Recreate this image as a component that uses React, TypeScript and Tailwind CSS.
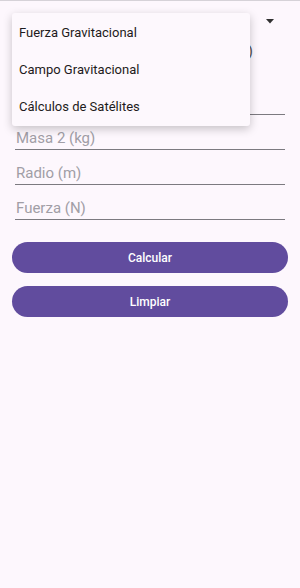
const fields = ['Masa 1 (kg)', 'Masa 2 (kg)', 'Radio (m)', 'Fuerza (N)'];
const options = ['Fuerza Gravitacional', 'Campo Gravitacional', 'Cálculos de Satélites'];

export default function App() {
  return (
    <div
      className="relative w-[300px] h-[588px] overflow-hidden bg-[#fdf7fd]"
      style={{ fontFamily: 'Roboto, "Noto Sans", sans-serif' }}
    >
      <div className="h-px bg-[#d6d2d8]" />

      <div className="px-[15px]">
        {/* spinner */}
        <div className="h-[40px] flex items-center justify-end pr-[11px]">
          <svg width="8" height="5" viewBox="0 0 8 5">
            <path d="M0 0 L8 0 L4 4.5 Z" fill="#303030" />
          </svg>
        </div>

        <div className="w-[238px] text-right text-[15px] leading-[20px] text-[#555]">
          Ingrese los valores (SI)
        </div>

        <div className="mt-[19px]">
          {fields.map((f) => (
            <div
              key={f}
              className="h-[35px] flex items-end border-b border-[#7c7a80]"
            >
              <span className="pl-px pb-[1px] text-[15px] leading-[20px] text-[#a19ea6]">{f}</span>
            </div>
          ))}
        </div>

        <div className="mt-[22px] -mx-[3px] flex flex-col gap-[13px]">
          <button className="h-[31px] rounded-full bg-[#614c9e] text-white text-[12px] font-medium">
            Calcular
          </button>
          <button className="h-[31px] rounded-full bg-[#614c9e] text-white text-[12px] font-medium">
            Limpiar
          </button>
        </div>
      </div>

      {/* open dropdown menu */}
      <div className="absolute left-[12px] top-[13px] w-[238px] py-[1px] rounded-[3px] bg-[#fdf8fd] shadow-[0_3px_10px_rgba(0,0,0,0.22)]">
        {options.map((o) => (
          <div key={o} className="h-[37px] flex items-center pl-[7px] text-[13px] text-[#1d1b20]">
            {o}
          </div>
        ))}
      </div>
    </div>
  );
}
